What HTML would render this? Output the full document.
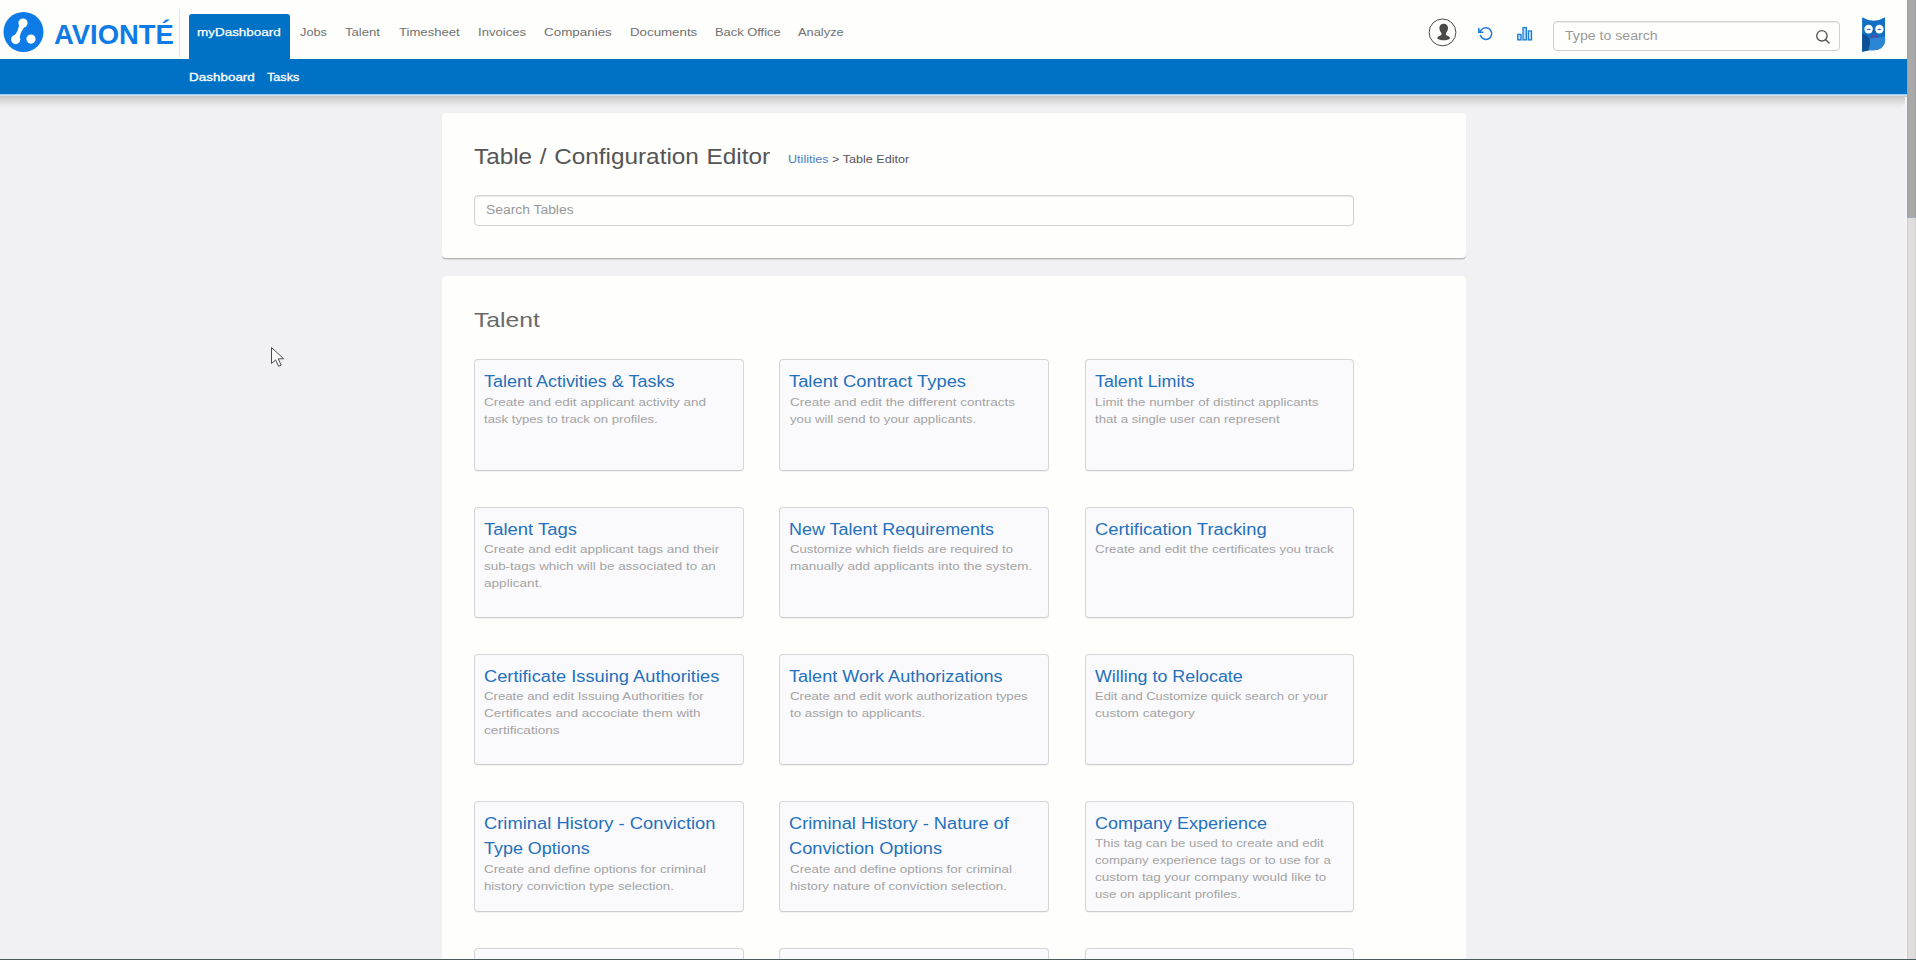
<!DOCTYPE html>
<html lang="en">
<head>
<meta charset="utf-8">
<title>Table / Configuration Editor</title>
<style>
*{box-sizing:border-box;margin:0;padding:0}
html,body{width:1916px;height:960px;overflow:hidden}
body{background:#f1f1f3;font-family:"Liberation Sans",sans-serif;color:#444;position:relative}
.abs{position:absolute}
/* header */
#hdr{position:absolute;left:0;top:0;width:1907px;height:59px;background:#fefefd}
#bar{position:absolute;left:0;top:59px;width:1907px;height:35px;background:#0072c6}
#barln{position:absolute;left:0;top:94px;width:1907px;height:2px;background:linear-gradient(#0072c6 0,#9fd0f5 25%,#d4ecfd 60%,#c9c8c6 100%)}
#barsh{position:absolute;left:0;top:96px;width:1907px;height:14px;background:linear-gradient(rgba(60,55,45,.23),rgba(60,55,45,.13) 30%,rgba(60,55,45,.05) 62%,rgba(60,55,45,0));border-radius:0 0 14px 0}
#logo{position:absolute;left:3px;top:11.200px;width:42px;height:42px}
#brand{position:absolute;left:53.5px;top:18.5px;font-size:27px;line-height:32px;font-weight:bold;color:#0f7be6;white-space:nowrap;transform-origin:0 0;transform:scaleX(1.016)}
#sep{position:absolute;left:179px;top:9px;width:1px;height:48px;background:#e2e2e2}
#tab{position:absolute;left:189px;top:14px;width:101px;height:46px;background:#0072c6;border-radius:3px 3px 0 0}
.nav{position:absolute;top:23.600px;font-size:11.5px;line-height:16px;color:#707070;white-space:nowrap;transform-origin:0 0;transform:scaleX(1.14)}
.nav.on{color:#fff}
.sub{position:absolute;top:68.600px;font-size:11.5px;line-height:16px;color:#fff;white-space:nowrap;transform-origin:0 0;transform:scaleX(1.13);-webkit-text-stroke:.3px #fff}
#srch{position:absolute;left:1553px;top:21px;width:287px;height:30px;border:1px solid #d0d0d2;border-radius:4px;background:#fefefd;box-shadow:inset 0 1px 1px rgba(0,0,0,.08)}
#srch span{position:absolute;left:11px;top:6px;font-size:12px;line-height:16px;color:#999;white-space:nowrap;transform-origin:0 0;transform:scaleX(1.177)}
/* scrollbar */
#track{position:absolute;left:1907px;top:0;width:9px;height:960px;background:#dfdedd;border-left:1px solid #cfcdcb;border-right:1px solid #d2d1cf}
#strip{position:absolute;left:1905px;top:97px;width:2px;height:862px;background:#f6f5f5}
#thumb{position:absolute;left:1907px;top:0;width:9px;height:217.500px;background:#a9a9a9;border-left:1px solid #9c9ca1;border-right:1px solid #9e9ea2;border-bottom:1px solid #9fb0c0}
#botline{position:absolute;left:0;top:959px;width:1916px;height:1px;background:#4b5a5a}
/* panels */
.panel{position:absolute;left:442px;width:1024px;background:#fefefd;border-radius:4px}
#p1{top:113px;height:145px;box-shadow:0 1px 0 #b7b6b6,0 2px 1px rgba(0,0,0,.10)}
#p2{top:276px;height:700px}
#title{position:absolute;left:474px;top:142px;font-size:22px;line-height:30px;color:#555;word-spacing:.8px;white-space:nowrap;transform-origin:0 0;transform:scaleX(1.1055)}
#crumb{position:absolute;left:788px;top:151px;font-size:11px;line-height:16px;color:#555;white-space:nowrap;transform-origin:0 0;transform:scaleX(1.145)}
#crumb a{color:#4a80c4;text-decoration:none}
#st{position:absolute;left:474px;top:195px;width:880px;height:31px;border:1px solid #d2d2d4;border-radius:4px;background:#fefefd;box-shadow:inset 0 1px 1px rgba(0,0,0,.09)}
#st span{position:absolute;left:11px;top:6px;font-size:12px;line-height:16px;color:#979797;white-space:nowrap;transform-origin:0 0;transform:scaleX(1.155)}
#sect{position:absolute;left:474px;top:304.500px;font-size:21px;line-height:30px;color:#6a6a6a;white-space:nowrap;transform-origin:0 0;transform:scaleX(1.177)}
.card{position:absolute;width:269.500px;height:111px;border:1px solid #d6d6d9;border-bottom-color:#cdcdcf;border-radius:4px;background:#fafafc;box-shadow:0 1px 1px rgba(0,0,0,.05)}
.card h3{position:absolute;left:9px;top:10.300px;width:240px;font-size:15.600px;line-height:24.300px;font-weight:normal;color:#2470bd;white-space:nowrap}
.card h3 span,.card p span{display:block;transform-origin:0 0}
.card p{position:absolute;left:9.200px;width:230px;font-size:11.5px;line-height:17px;color:#a3a3a3;white-space:nowrap}
.c1{left:474px}.c2{left:779.400px}.c3{left:1085px;width:269px}
.r1{top:359px;height:112px}.r2{top:507px}.r3{top:654px}.r4{top:801px}.r5{top:948px}
.card p{top:32.700px}
.r1 p{top:33.500px}
.card.two p{top:58.500px}
</style>
</head>
<body>
<div id="hdr"></div>
<div id="bar"></div><div id="barln"></div><div id="barsh"></div>
<svg id="logo" viewBox="0 0 42 42"><circle cx="20.5" cy="21" r="20" fill="#0f7be6"/><path d="M23.57 13.68 Q16.35 20.35 16.27 30.18 L9.13 27.02 Q16.35 20.35 16.43 10.52 Z" fill="#fefefd"/><circle cx="20" cy="12.1" r="4.600" fill="#fefefd"/><circle cx="12.7" cy="28.600" r="4.600" fill="#fefefd"/><circle cx="28" cy="28.100" r="4.600" fill="#fefefd"/></svg>
<div id="brand">AVIONTÉ</div>
<div id="sep"></div>
<div id="tab"></div>
<div class="nav on" style="left:197.200px;transform:scaleX(1.17);-webkit-text-stroke:.25px #fff">myDashboard</div>
<div class="nav" style="left:299.700px;transform:scaleX(1.11)">Jobs</div>
<div class="nav" style="left:345px">Talent</div>
<div class="nav" style="left:399px">Timesheet</div>
<div class="nav" style="left:478px">Invoices</div>
<div class="nav" style="left:543.500px;transform:scaleX(1.166)">Companies</div>
<div class="nav" style="left:629.700px;transform:scaleX(1.156)">Documents</div>
<div class="nav" style="left:714.700px;transform:scaleX(1.12)">Back Office</div>
<div class="nav" style="left:798px;transform:scaleX(1.117)">Analyze</div>
<div class="sub" style="left:188.700px;transform:scaleX(1.17)">Dashboard</div>
<div class="sub" style="left:267.100px;transform:scaleX(1.1)">Tasks</div>

<svg class="abs" style="left:1427px;top:17px" width="31" height="31" viewBox="0 0 31 31"><circle cx="15.5" cy="15.4" r="13.4" fill="#fefefd" stroke="#4a4a4a" stroke-width="1"/><path d="M16.7 6.7C13.9 6.7 12.4 8.5 12.4 11C12.4 13 13.2 14.8 14.4 15.9C14.6 16.9 14.4 17.8 13.9 18.3C12.6 19 10.8 19.4 10.2 21.200C11.500 22.600 14 23.300 16.700 23.300C19.400 23.300 21.900 22.600 23.200 21.200C22.600 19.400 20.800 19 19.500 18.300C19 17.800 18.800 16.900 19 15.900C20.200 14.800 21 13 21 11C21 8.500 19.500 6.700 16.700 6.700Z" fill="#4a4a4a"/></svg>
<svg class="abs" style="left:1476px;top:25px" width="19" height="18" viewBox="0 0 19 18"><g transform="translate(2.2,0.9) scale(0.644)" fill="none" stroke="#1a7ad6" stroke-width="2.35" stroke-linecap="round" stroke-linejoin="round"><path d="M1 4L1 10L7 10"/><path d="M3.51 15a9 9 0 1 0 2.130-9.360L1 10"/></g></svg>
<svg class="abs" style="left:1516px;top:26px" width="18" height="16" viewBox="0 0 18 16"><g fill="#bfe0fb" stroke="#1a7ad6" stroke-width="1.3"><rect x="1.8" y="8.4" width="3.2" height="5.5"/><rect x="7.000" y="1.6" width="3.3" height="12.3"/><rect x="12.300" y="5" width="3.200" height="8.900"/></g></svg>

<svg class="abs" style="left:1860px;top:16px" width="28" height="37" viewBox="0 0 28 37"><path d="M2.1 1.200Q13.500 8.200 25 1.200L25.100 25.500Q23.500 33.600 14 34.200L9 34.300L2.200 35.700Z" fill="#1170c4"/><path d="M2.100 17.800Q9.300 19.500 10 26Q10 31 8.300 34.400L2.200 35.700Z" fill="#0f4f93"/><path d="M10.200 22.500L25.100 20.800L25.100 25.500Q23.500 33.600 14 34.200L8.400 34.300Q10.300 29.500 10.200 22.500Z" fill="#2b86d3"/><ellipse cx="8.600" cy="13.100" rx="4.300" ry="4.300" fill="#fefefd"/><ellipse cx="19.400" cy="13.100" rx="4.200" ry="4.300" fill="#fefefd"/><path d="M6.700 14.100Q8.800 11.300 10.900 14.100ZM17.200 14.100Q19.300 11.300 21.400 14.100Z" fill="#1b63ad"/><path d="M12.700 14.200Q13.700 13.200 14.700 14.200L14.200 17.600L13.200 17.600Z" fill="#3f4470"/><path d="M10.800 18.700L14.200 19.900L17.700 18.700L17.700 21.900L14.200 20.900L10.800 21.900Z" fill="#64409c"/><path d="M12.300 21.300L13.600 20.900L13.600 21.700ZM15 20.900L16.400 21.300L15 21.700Z" fill="#d0453c"/></svg>
<svg class="abs" style="left:268px;top:344px" width="20" height="26" viewBox="0 0 20 26"><path d="M3.500 3.500 L3.500 19.500 L7.600 15.900 L10.600 22.300 L13.200 21.100 L10.200 14.900 L15.600 14.700 Z" fill="#fefefe" stroke="#4d4a56" stroke-width="1" stroke-linejoin="round"/></svg>
<div id="srch"><span>Type to search</span></div>
<svg class="abs" style="left:1813px;top:27px" width="20" height="20" viewBox="0 0 20 20"><circle cx="8.9" cy="8.8" r="5.2" fill="none" stroke="#55504f" stroke-width="1.350"/><path d="M12.7 12.7 L16 16" stroke="#55504f" stroke-width="1.500" stroke-linecap="round"/></svg>

<div class="panel" id="p1"></div>
<div id="title">Table / Configuration Editor</div>
<div id="crumb"><a>Utilities</a> &gt; Table Editor</div>
<div id="st"><span>Search Tables</span></div>

<div class="panel" id="p2"></div>
<div id="sect">Talent</div>

<div class="card c1 r1"><h3><span style="transform:scaleX(1.152)">Talent Activities &amp; Tasks</span></h3><p><span style="transform:scaleX(1.178)">Create and edit applicant activity and</span><span style="transform:scaleX(1.142)">task types to track on profiles.</span></p></div>
<div class="card c2 r1"><h3><span style="transform:scaleX(1.176)">Talent Contract Types</span></h3><p><span style="transform:scaleX(1.170)">Create and edit the different contracts</span><span style="transform:scaleX(1.147)">you will send to your applicants.</span></p></div>
<div class="card c3 r1"><h3><span style="transform:scaleX(1.146)">Talent Limits</span></h3><p><span style="transform:scaleX(1.161)">Limit the number of distinct applicants</span><span style="transform:scaleX(1.146)">that a single user can represent</span></p></div>
<div class="card c1 r2"><h3><span style="transform:scaleX(1.183)">Talent Tags</span></h3><p><span style="transform:scaleX(1.172)">Create and edit applicant tags and their</span><span style="transform:scaleX(1.166)">sub-tags which will be associated to an</span><span style="transform:scaleX(1.182)">applicant.</span></p></div>
<div class="card c2 r2"><h3><span style="transform:scaleX(1.150)">New Talent Requirements</span></h3><p><span style="transform:scaleX(1.144)">Customize which fields are required to</span><span style="transform:scaleX(1.169)">manually add applicants into the system.</span></p></div>
<div class="card c3 r2"><h3><span style="transform:scaleX(1.179)">Certification Tracking</span></h3><p><span style="transform:scaleX(1.159)">Create and edit the certificates you track</span></p></div>
<div class="card c1 r3"><h3><span style="transform:scaleX(1.170)">Certificate Issuing Authorities</span></h3><p><span style="transform:scaleX(1.145)">Create and edit Issuing Authorities for</span><span style="transform:scaleX(1.176)">Certificates and accociate them with</span><span style="transform:scaleX(1.184)">certifications</span></p></div>
<div class="card c2 r3"><h3><span style="transform:scaleX(1.159)">Talent Work Authorizations</span></h3><p><span style="transform:scaleX(1.155)">Create and edit work authorization types</span><span style="transform:scaleX(1.156)">to assign to applicants.</span></p></div>
<div class="card c3 r3"><h3><span style="transform:scaleX(1.144)">Willing to Relocate</span></h3><p><span style="transform:scaleX(1.128)">Edit and Customize quick search or your</span><span style="transform:scaleX(1.184)">custom category</span></p></div>
<div class="card c1 r4 two"><h3><span style="transform:scaleX(1.177)">Criminal History - Conviction</span><span style="transform:scaleX(1.150)">Type Options</span></h3><p><span style="transform:scaleX(1.161)">Create and define options for criminal</span><span style="transform:scaleX(1.151)">history conviction type selection.</span></p></div>
<div class="card c2 r4 two"><h3><span style="transform:scaleX(1.169)">Criminal History - Nature of</span><span style="transform:scaleX(1.170)">Conviction Options</span></h3><p><span style="transform:scaleX(1.161)">Create and define options for criminal</span><span style="transform:scaleX(1.150)">history nature of conviction selection.</span></p></div>
<div class="card c3 r4"><h3><span style="transform:scaleX(1.153)">Company Experience</span></h3><p><span style="transform:scaleX(1.150)">This tag can be used to create and edit</span><span style="transform:scaleX(1.149)">company experience tags or to use for a</span><span style="transform:scaleX(1.167)">custom tag your company would like to</span><span style="transform:scaleX(1.146)">use on applicant profiles.</span></p></div>

<div class="card c1 r5"></div>
<div class="card c2 r5"></div>
<div class="card c3 r5"></div>

<div id="strip"></div>
<div id="track"></div>
<div id="thumb"></div>
<div id="botline"></div>
</body>
</html>
